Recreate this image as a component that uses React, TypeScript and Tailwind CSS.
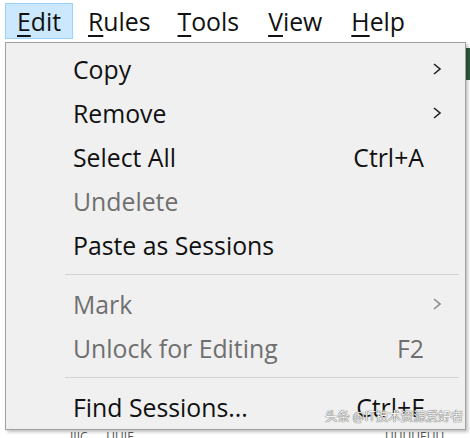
import React from "react";

const font = { fontFamily: '"Open Sans", "Noto Sans CJK SC", sans-serif' };

function U({ c, rest }: { c: string; rest: string }) {
  return (
    <span>
      <span className="underline decoration-[1.5px] underline-offset-[4px]">{c}</span>
      {rest}
    </span>
  );
}

function Chevron({ dim }: { dim?: boolean }) {
  return (
    <svg width="10" height="14" viewBox="0 0 10 14" className="mr-[23px]">
      <path d="M2 2 L8 7 L2 12" fill="none" stroke={dim ? "#8a8a8a" : "#222"} strokeWidth="1.6" />
    </svg>
  );
}

function Row({ label, right, disabled, chevron }: { label: string; right?: string; disabled?: boolean; chevron?: boolean }) {
  return (
    <div className={`flex h-[44px] items-center justify-between pl-[67px] ${disabled ? "text-[#6f6f6f]" : "text-[#111]"}`}>
      <span>{label}</span>
      {chevron ? <Chevron dim={disabled} /> : right ? <span className="mr-[41px]">{right}</span> : null}
    </div>
  );
}

function Sep() {
  return <div className="my-[7px] ml-[59px] mr-[6px] h-px bg-[#d2d2d2]" />;
}

export default function App() {
  return (
    <div className="relative h-[438px] w-[470px] overflow-hidden bg-white text-[24.8px] leading-none" style={font}>
      <div className="flex h-[42px] items-center pl-[5px] text-[#111]">
        <div className="flex h-[36px] w-[68px] items-center border border-[#99d1ff] bg-[#cce8ff] pl-[11px]">
          <U c="E" rest="dit" />
        </div>
        <div className="ml-[15px]"><U c="R" rest="ules" /></div>
        <div className="ml-[27px]"><U c="T" rest="ools" /></div>
        <div className="ml-[29px]"><U c="V" rest="iew" /></div>
        <div className="ml-[29px]"><U c="H" rest="elp" /></div>
      </div>
      <div className="absolute right-0 top-[48px] h-[32px] w-[4px] bg-[#2f5b3a]" />
      <div className="absolute left-[70px] top-[431px] whitespace-nowrap text-[12px] text-[#555]">IIIC&nbsp;&nbsp;&nbsp;&nbsp;&nbsp;&nbsp;UUIE</div>
      <div className="absolute left-[385px] top-[431px] whitespace-nowrap text-[12px] text-[#555]">UUUUEUU</div>
      <div className="absolute left-[5px] top-[42px] h-[388px] w-[461px] border border-[#a0a0a0] bg-[#f0f0f0] pt-[4px] shadow-[2px_2px_3px_rgba(0,0,0,0.25)]">
        <Row label="Copy" chevron />
        <Row label="Remove" chevron />
        <Row label="Select All" right="Ctrl+A" />
        <Row label="Undelete" disabled />
        <Row label="Paste as Sessions" />
        <Sep />
        <Row label="Mark" disabled chevron />
        <Row label="Unlock for Editing" right="F2" disabled />
        <Sep />
        <Row label="Find Sessions..." right="Ctrl+F" />
        <div
          className="absolute left-[319px] top-[367px] whitespace-nowrap text-[12.5px] leading-none text-[#f4f4f4]"
          style={{ fontFamily: '"Noto Sans CJK SC", sans-serif', textShadow: "0 0 1px #555, 0 0 1px #555" }}
        >
          头条 @IT技术资源爱好者
        </div>
      </div>
    </div>
  );
}
